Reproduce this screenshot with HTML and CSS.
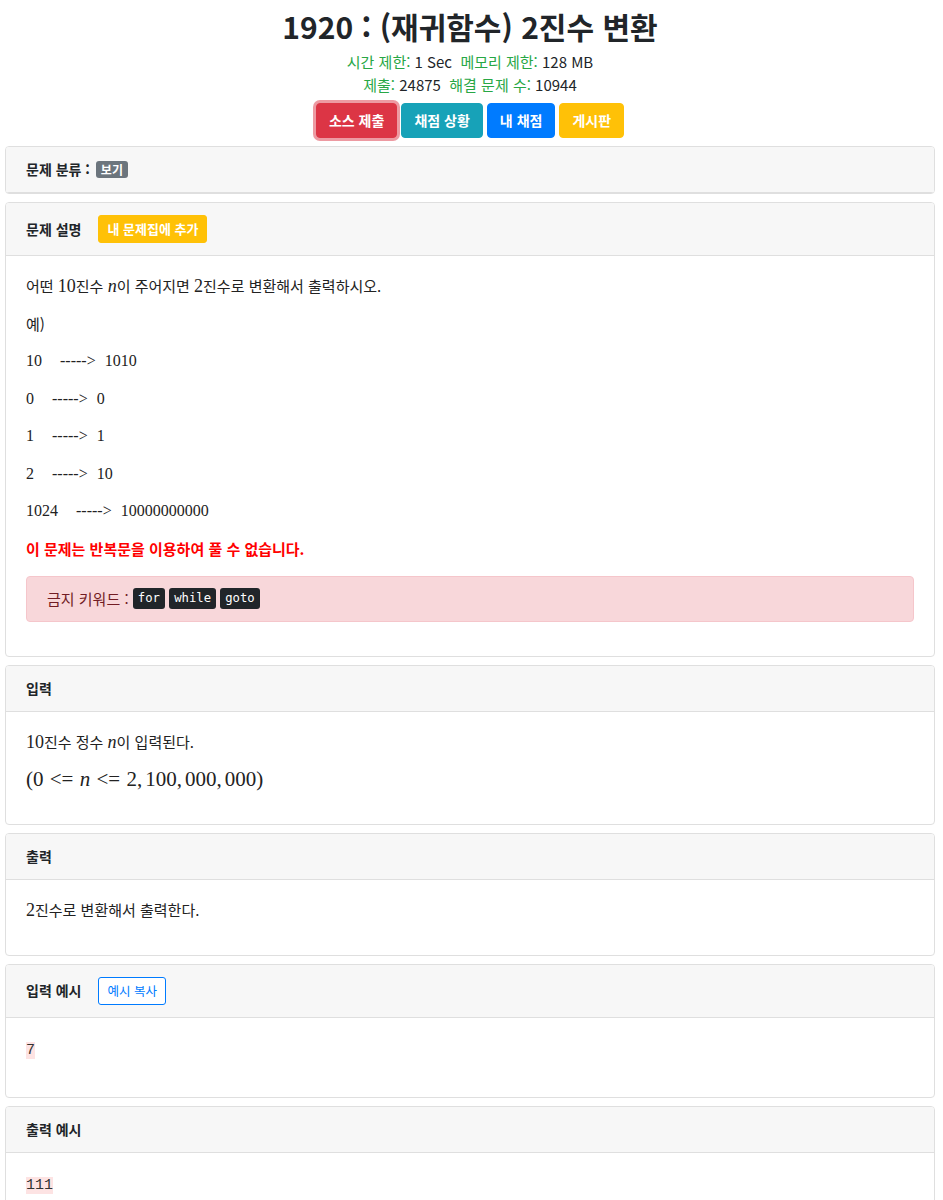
FILE: index.html
```html
<!DOCTYPE html>
<html lang="ko">
<head>
<meta charset="utf-8">
<title>1920 : (재귀함수) 2진수 변환</title>
<link rel="stylesheet" href="styles.css">
</head>
<body>
<div class="page">
  <header class="problem-head">
    <h1 class="title">1920 : (재귀함수) 2진수 변환</h1>
    <div class="meta"><span class="lbl">시간 제한:</span> 1 Sec&nbsp; <span class="lbl">메모리 제한:</span> 128 MB</div>
    <div class="meta"><span class="lbl">제출:</span> 24875&nbsp; <span class="lbl">해결 문제 수:</span> 10944</div>
    <div class="actions">
      <a class="btn btn-danger btn-focus">소스 제출</a>
      <a class="btn btn-info">채점 상황</a>
      <a class="btn btn-primary">내 채점</a>
      <a class="btn btn-warning">게시판</a>
    </div>
  </header>

  <section class="card">
    <div class="card-header">문제 분류 : <span class="badge">보기</span></div>
  </section>

  <section class="card">
    <div class="card-header with-btn">
      <span>문제 설명</span>
      <a class="btn btn-sm btn-warning">내 문제집에 추가</a>
    </div>
    <div class="card-body desc">
      <p>어떤 <span class="m">10</span>진수 <span class="m"><var>n</var></span>이 주어지면 <span class="m">2</span>진수로 변환해서 출력하시오.</p>
      <p>예)</p>
      <p class="ex"><span>10</span><span class="arrow">-----&gt;</span><span>1010</span></p>
      <p class="ex"><span>0</span><span class="arrow">-----&gt;</span><span>0</span></p>
      <p class="ex"><span>1</span><span class="arrow">-----&gt;</span><span>1</span></p>
      <p class="ex"><span>2</span><span class="arrow">-----&gt;</span><span>10</span></p>
      <p class="ex"><span>1024</span><span class="arrow">-----&gt;</span><span>10000000000</span></p>
      <p class="warn">이 문제는 반복문을 이용하여 풀 수 없습니다.</p>
      <div class="alert">금지 키워드 : <kbd>for</kbd> <kbd>while</kbd> <kbd>goto</kbd></div>
    </div>
  </section>

  <section class="card">
    <div class="card-header">입력</div>
    <div class="card-body desc">
      <p><span class="m">10</span>진수 정수 <span class="m"><var>n</var></span>이 입력된다.</p>
      <p><span class="m big">(0 <span class="rel">&lt;=</span> <var>n</var> <span class="rel">&lt;=</span> 2,<span class="th"></span>100,<span class="th"></span>000,<span class="th"></span>000)</span></p>
    </div>
  </section>

  <section class="card">
    <div class="card-header">출력</div>
    <div class="card-body desc">
      <p><span class="m">2</span>진수로 변환해서 출력한다.</p>
    </div>
  </section>

  <section class="card">
    <div class="card-header with-btn">
      <span>입력 예시</span>
      <a class="btn btn-sm btn-outline-primary">예시 복사</a>
    </div>
    <div class="card-body">
      <pre class="sample"><span class="hl">7</span></pre>
    </div>
  </section>

  <section class="card">
    <div class="card-header">출력 예시</div>
    <div class="card-body">
      <pre class="sample"><span class="hl">111</span></pre>
    </div>
  </section>
</div>
</body>
</html>
```

FILE: styles.css
```css
* { box-sizing: border-box; }

body {
  margin: 0;
  font-family: "Noto Sans CJK KR", "Noto Sans", sans-serif;
  font-size: 14px;
  line-height: 1.5;
  color: #212529;
  background: #fff;
}

.page {
  padding: 0 8px 0 5px;
}

.problem-head {
  display: flex;
  flex-direction: column;
  align-items: center;
  margin-bottom: 8px;
}

.title {
  margin: 8px 0 6px;
  font-size: 30px;
  font-weight: 700;
  line-height: 1.2;
  color: #212529;
}

.meta {
  font-size: 15px;
  line-height: 23px;
  color: #212529;
}

.lbl { color: #28a745; }

.actions {
  display: flex;
  gap: 4px;
  margin-top: 7px;
}

.btn {
  display: inline-block;
  padding: 6px 12px;
  font-size: 14px;
  font-weight: 700;
  line-height: 21px;
  color: #fff;
  border: 1px solid transparent;
  border-radius: 4px;
  text-decoration: none;
  white-space: nowrap;
}

.btn-danger { background: #dc3545; border-color: #dc3545; }
.btn-focus { box-shadow: 0 0 0 3px rgba(220, 53, 69, 0.5); }
.btn-info { background: #17a2b8; border-color: #17a2b8; }
.btn-primary { background: #007bff; border-color: #007bff; }
.btn-warning { background: #ffc107; border-color: #ffc107; color: #fff; }

.btn-sm {
  padding: 4px 8px;
  font-size: 13px;
  line-height: 18px;
  border-radius: 3px;
}

.btn-outline-primary {
  background: #fff;
  color: #007bff;
  border-color: #007bff;
  font-weight: 400;
  font-size: 12.5px;
}

.card {
  border: 1px solid #dfdfdf;
  border-radius: 4px;
  margin-bottom: 8px;
  background: #fff;
  overflow: hidden;
}

.card-header {
  padding: 12px 20px;
  background: #f7f7f7;
  border-bottom: 1px solid #dfdfdf;
  font-weight: 700;
  font-size: 14px;
  line-height: 21px;
}

.card-header.with-btn {
  display: flex;
  align-items: center;
  gap: 17px;
}

.badge {
  display: inline-block;
  margin-left: 2px;
  padding: 1px 5px;
  font-size: 12px;
  line-height: 15px;
  font-weight: 700;
  color: #fff;
  background: #6c757d;
  border-radius: 3px;
}

.card-body {
  padding: 19px 20px 18px;
}

.desc p {
  margin: 0 0 15px;
  font-size: 15px;
  line-height: 22.5px;
  color: #222;
}

.m {
  font-family: "Liberation Serif", "DejaVu Serif", serif;
  font-size: 18px;
  line-height: 0;
}

.m var { font-style: italic; }

.m.big { font-size: 21px; }

.rel { margin: 0 1px; }
.th { display: inline-block; width: 3px; }

.desc p.ex {
  font-family: "Liberation Serif", "DejaVu Serif", serif;
  font-size: 16px;
  color: #222;
}

.arrow { margin: 0 9px 0 18px; }

.desc p.warn {
  color: #ff0000;
  font-weight: 700;
  margin-bottom: 16px;
}

.alert {
  padding: 11px 20px;
  margin-bottom: 16px;
  background: #f8d7da;
  border: 1px solid #f5c6cb;
  border-radius: 4px;
  color: #721c24;
  font-size: 15px;
  line-height: 22px;
}

kbd {
  display: inline-block;
  padding: 0 5px;
  font-family: "DejaVu Sans Mono", "Liberation Mono", monospace;
  font-size: 12.25px;
  line-height: 21px;
  color: #fff;
  background: #212529;
  border-radius: 3px;
  vertical-align: top;
}

.sample {
  margin: 3px 0 18px;
  font-family: "Liberation Mono", "DejaVu Sans Mono", monospace;
  font-size: 15px;
  line-height: 21px;
  color: #333;
}

.hl { background: #fde3e3; }
```
